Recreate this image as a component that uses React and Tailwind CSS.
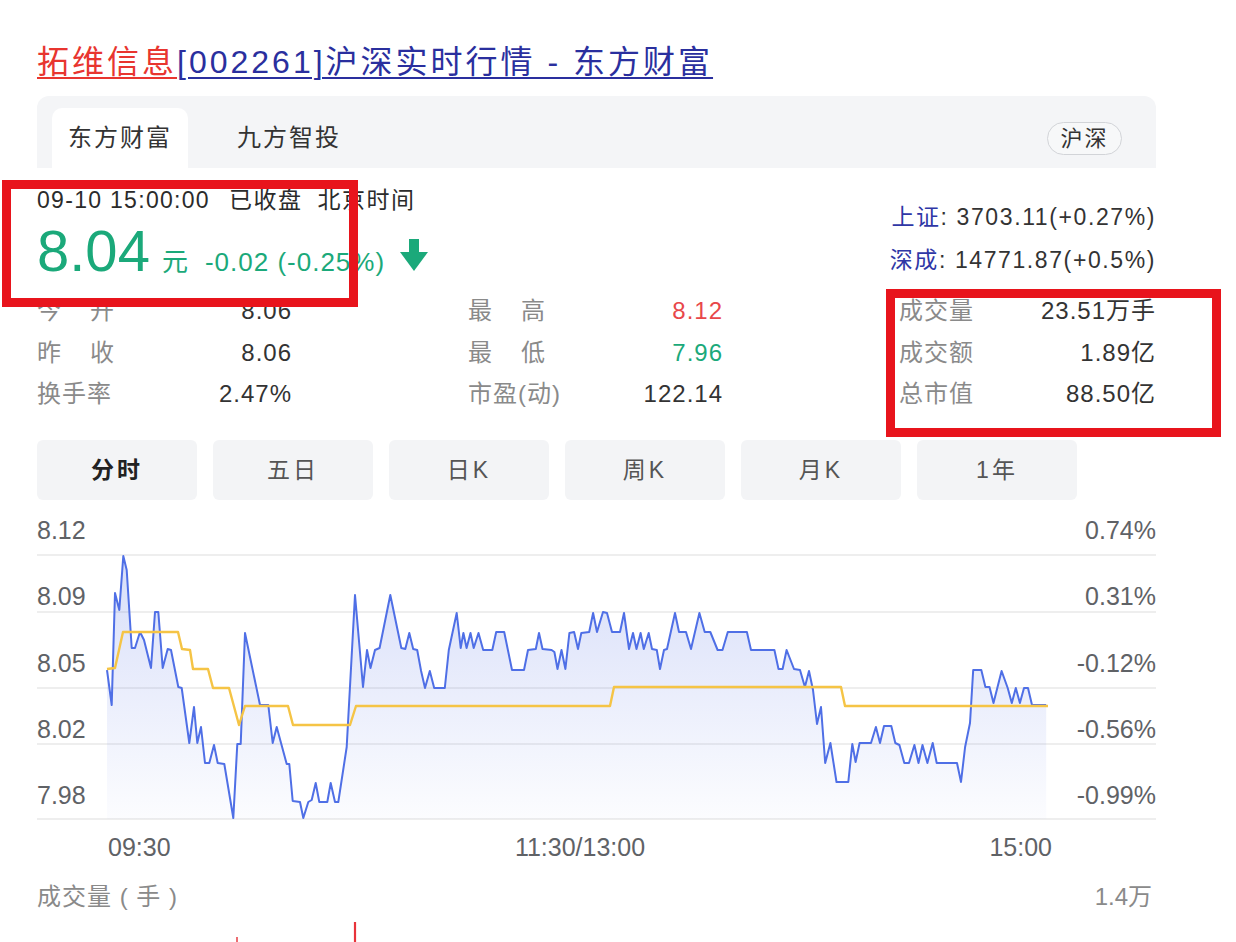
const BLUE = [[107,670],[111.7,705],[115,593],[119.3,610],[123.3,556],[126.7,570],[131.7,648],[135,648],[140,632],[144,640],[151,668],[155,612],[158.3,612],[162.7,668],[167.7,649],[171,650],[178.3,687],[181.7,688],[189.3,743],[194,707],[197.3,743],[201,727],[205,763],[209.3,763],[214,745],[217.7,763],[224.3,764],[233.3,818],[237.3,744],[240.7,744],[245,633],[260,705],[268.3,705],[272.7,743],[276.7,727],[286.7,764],[289.3,764],[292.7,801],[300,802],[303.3,818],[308.3,802],[311.7,800],[315.7,783],[319.3,802],[327.3,802],[330.7,783],[335,802],[338.3,802],[346.7,747],[355,595],[363,687],[367,650],[370.5,668],[375,650],[379.6,648],[390.3,595],[401.3,648],[405.3,649],[409.3,633],[413.2,649],[417.2,650],[421.1,671],[425,688],[429.8,671],[434.2,688],[444.8,688],[448.8,650],[456.7,613],[460.7,648],[463.4,633],[466.6,648],[470.5,633],[473.7,648],[478.5,633],[483.2,650],[492.3,650],[496.2,632],[504.2,632],[512,670],[524,670],[528,650],[535.8,649],[539,633],[542.5,649],[551.6,650],[554.4,652],[557.5,669],[561.5,650],[565.4,669],[569.4,633],[574.1,632],[578,649],[581.3,633],[589.2,632],[593.1,613],[597,632],[603,612],[607,613],[612,632],[620,632],[624,613],[629,649],[633,633],[636.5,649],[640.6,633],[643.8,649],[648.7,633],[652,649],[656.8,650],[660,669],[664,650],[667,649],[675,613],[679,632],[686,632],[691,649],[699.4,613],[704.7,632],[710.3,632],[717.6,650],[722.5,650],[727.8,632],[746.9,632],[751,650],[774.4,650],[778.5,669],[782.6,669],[786.6,650],[794,669],[800,670],[804.9,687],[809,671],[813,690],[817,724],[821,707],[825.2,763],[830.4,743],[836.5,782],[848.3,782],[852.3,744],[855.6,762],[859.6,743],[871,743],[875.9,727],[880,743],[884,726],[891.3,726],[895.3,743],[899.4,745],[904.3,763],[909,763],[914.4,745],[918.5,763],[922.5,745],[927.4,763],[932.7,743],[936.7,763],[957,763],[961,782],[965.1,747],[970,723],[973.2,670],[981.3,670],[985.4,687],[989.5,687],[993.5,703],[1001.6,671],[1007.7,688],[1011.8,703],[1015.8,688],[1019.9,703],[1024,688],[1028,688],[1032,705],[1046.2,705]];

const YELLOW = [[107,669],[115,668],[123,632],[178,632],[182,649],[190,650],[193,669],[208,669],[213,688],[229,688],[239,725],[245,706],[288,706],[293,725],[350,725],[356,706],[610,706],[614,687],[841,687],[845,706],[1048,706]];

const GRID = [555, 612, 688, 744, 819];

function Chart() {
  const line = BLUE.map((p) => p.join(",")).join(" ");
  const area = line + " 1046.2,819 107,819";
  const avg = YELLOW.map((p) => p.join(",")).join(" ");
  const rows = [
    ["8.12", "0.74%"],
    ["8.09", "0.31%"],
    ["8.05", "-0.12%"],
    ["8.02", "-0.56%"],
    ["7.98", "-0.99%"],
  ];
  return (
    <div className="relative mt-[10px] h-[320px]">
      <svg className="absolute inset-0" width="1119" height="320" viewBox="37 510 1119 320">
        <defs>
          <linearGradient id="fillg" x1="0" y1="0" x2="0" y2="1">
            <stop offset="0" stopColor="#5a76e6" stopOpacity="0.24" />
            <stop offset="1" stopColor="#5a76e6" stopOpacity="0.02" />
          </linearGradient>
        </defs>
        {GRID.map((y) => (
          <line key={y} x1="37" x2="1156" y1={y} y2={y} stroke="#eeeeee" strokeWidth="2" />
        ))}
        <polygon points={area} fill="url(#fillg)" />
        <polyline points={line} fill="none" stroke="#4f6fe6" strokeWidth="2" strokeLinejoin="round" />
        <polyline points={avg} fill="none" stroke="#f5c445" strokeWidth="2.4" strokeLinejoin="round" />
      </svg>
      <div className="relative flex flex-col pt-[5px]">
        {rows.map(([l, r]) => (
          <div key={l} className="flex h-[66.25px] justify-between text-[25px] leading-[30px] text-[#5f6266]">
            <span>{l}</span>
            <span>{r}</span>
          </div>
        ))}
      </div>
    </div>
  );
}

function Label2({ a, b }) {
  return (
    <span className="flex w-[78px] justify-between text-[#8a8a8a]">
      <span>{a}</span>
      <span>{b}</span>
    </span>
  );
}

function StatRow({ label, value, valueClass }) {
  return (
    <div className="flex h-[41.5px] items-center justify-between leading-[41.5px]">
      {label}
      <span className={valueClass}>{value}</span>
    </div>
  );
}

export default function App() {
  return (
    <div className="relative h-[942px] w-[1236px] overflow-hidden bg-white font-['Liberation_Sans','Noto_Sans_CJK_SC',sans-serif] text-[#333]">
      <div className="ml-[37px] w-[1119px] pt-[42px]">
        {/* Title */}
        <div className="h-[40px] whitespace-nowrap text-[32px] leading-[40px] tracking-[3px]">
          <a className="text-[#e8352f] underline decoration-2 underline-offset-[4px]">拓维信息</a>
          <a className="text-[#2a2f9e] underline decoration-2 underline-offset-[4px]">[002261]沪深实时行情 - 东方财富</a>
        </div>

        {/* Tab bar */}
        <div className="mt-[14px] flex h-[72px] items-end justify-between rounded-t-[12px] bg-[#f4f5f7] pl-[15px] pr-[34px]">
          <div className="flex h-[60px] items-stretch gap-[33px]">
            <div className="flex w-[136px] items-center justify-center rounded-t-[10px] bg-white text-[24px] tracking-[2px] text-[#333]">
              东方财富
            </div>
            <div className="flex w-[136px] items-center justify-center text-[24px] tracking-[2px] text-[#333]">
              九方智投
            </div>
          </div>
          <div className="flex h-[60px] items-center">
            <div className="flex h-[33px] w-[75px] items-center justify-center rounded-full border-[1.5px] border-[#d2d4d8] bg-[#f7f8f9] text-[22px] tracking-[2px] text-[#333]">
              沪深
            </div>
          </div>
        </div>

        {/* Info */}
        <div className="mt-[17px] flex h-[105px] justify-between">
          <div className="flex flex-col">
            <div className="flex h-[30px] items-center whitespace-nowrap text-[23px] leading-[30px] text-[#2b2b2b]">
              <span className="tracking-[1.3px]">09-10 15:00:00</span>
              <span className="ml-[19px] tracking-[1.5px]">已收盘</span>
              <span className="ml-[15px] tracking-[1.5px]">北京时间</span>
            </div>
            <div className="mt-[7px] flex items-baseline whitespace-nowrap text-[#1ba97a]">
              <span className="text-[58px] leading-[58px]">8.04</span>
              <span className="ml-[12px] text-[26px]">元</span>
              <span className="ml-[17px] text-[26px] tracking-[1px]">-0.02 (-0.25%)</span>
              <svg className="mb-[-5px] ml-[15px]" width="28" height="32" viewBox="0 0 28 32">
                <rect x="9" y="0" width="10" height="14" fill="#1ba97a" />
                <polygon points="0,13 28,13 14,32" fill="#1ba97a" />
              </svg>
            </div>
          </div>
          <div className="flex flex-col items-end pt-[11px] text-[23px] leading-[43px] tracking-[1.6px]">
            <div className="whitespace-nowrap">
              <span className="text-[#2f37a6]">上证</span>
              <span className="text-[#333]">: 3703.11(+0.27%)</span>
            </div>
            <div className="whitespace-nowrap">
              <span className="text-[#2f37a6]">深成</span>
              <span className="text-[#333]">: 14771.87(+0.5%)</span>
            </div>
          </div>
        </div>

        {/* Stats */}
        <div className="flex justify-between text-[24px] tracking-[1px]">
          <div className="flex w-[255px] flex-col">
            <StatRow label={<Label2 a="今" b="开" />} value="8.06" valueClass="text-[#333]" />
            <StatRow label={<Label2 a="昨" b="收" />} value="8.06" valueClass="text-[#333]" />
            <StatRow label={<span className="text-[#8a8a8a]">换手率</span>} value="2.47%" valueClass="text-[#333]" />
          </div>
          <div className="flex w-[255px] flex-col">
            <StatRow label={<Label2 a="最" b="高" />} value="8.12" valueClass="text-[#e8474a]" />
            <StatRow label={<Label2 a="最" b="低" />} value="7.96" valueClass="text-[#1ba97a]" />
            <StatRow label={<span className="text-[#8a8a8a]">市盈(动)</span>} value="122.14" valueClass="text-[#333]" />
          </div>
          <div className="flex w-[257px] flex-col">
            <StatRow label={<span className="text-[#8a8a8a]">成交量</span>} value="23.51万手" valueClass="text-[#333]" />
            <StatRow label={<span className="text-[#8a8a8a]">成交额</span>} value="1.89亿" valueClass="text-[#333]" />
            <StatRow label={<span className="text-[#8a8a8a]">总市值</span>} value="88.50亿" valueClass="text-[#333]" />
          </div>
        </div>

        {/* Period buttons */}
        <div className="mt-[25.5px] flex gap-[16px]">
          <div className="flex h-[60px] w-[160px] items-center justify-center rounded-[6px] bg-[#f3f4f6] text-[23px] font-bold tracking-[3px] text-[#222]">分时</div>
          <div className="flex h-[60px] w-[160px] items-center justify-center rounded-[6px] bg-[#f3f4f6] text-[23px] tracking-[3px] text-[#555]">五日</div>
          <div className="flex h-[60px] w-[160px] items-center justify-center rounded-[6px] bg-[#f3f4f6] text-[23px] tracking-[3px] text-[#555]">日K</div>
          <div className="flex h-[60px] w-[160px] items-center justify-center rounded-[6px] bg-[#f3f4f6] text-[23px] tracking-[3px] text-[#555]">周K</div>
          <div className="flex h-[60px] w-[160px] items-center justify-center rounded-[6px] bg-[#f3f4f6] text-[23px] tracking-[3px] text-[#555]">月K</div>
          <div className="flex h-[60px] w-[160px] items-center justify-center rounded-[6px] bg-[#f3f4f6] text-[23px] tracking-[3px] text-[#555]">1年</div>
        </div>

        <Chart />

        {/* Time axis */}
        <div className="ml-[71px] flex h-[34px] w-[944px] justify-between text-[25px] leading-[34px] text-[#5f6266]">
          <span>09:30</span>
          <span>11:30/13:00</span>
          <span>15:00</span>
        </div>

        {/* Volume header */}
        <div className="mt-[16px] flex h-[34px] justify-between text-[24px] leading-[34px] text-[#8a8a8a]">
          <span className="tracking-[1px]">成交量 ( 手 )</span>
          <span className="pr-[4px]">1.4万</span>
        </div>

        <svg width="1119" height="28" viewBox="37 914 1119 28" className="block">
          <line x1="355" x2="355" y1="922" y2="942" stroke="#e8333a" strokeWidth="2.2" />
          <line x1="237" x2="237" y1="937" y2="942" stroke="#ec6d72" strokeWidth="2" />
        </svg>
      </div>

      {/* Annotation boxes */}
      <div className="pointer-events-none absolute left-[2px] top-[180px] h-[127px] w-[356px] border-[9px] border-[#e8141c]" />
      <div className="pointer-events-none absolute left-[886px] top-[289px] h-[148px] w-[335px] border-[9px] border-[#e8141c]" />
    </div>
  );
}
